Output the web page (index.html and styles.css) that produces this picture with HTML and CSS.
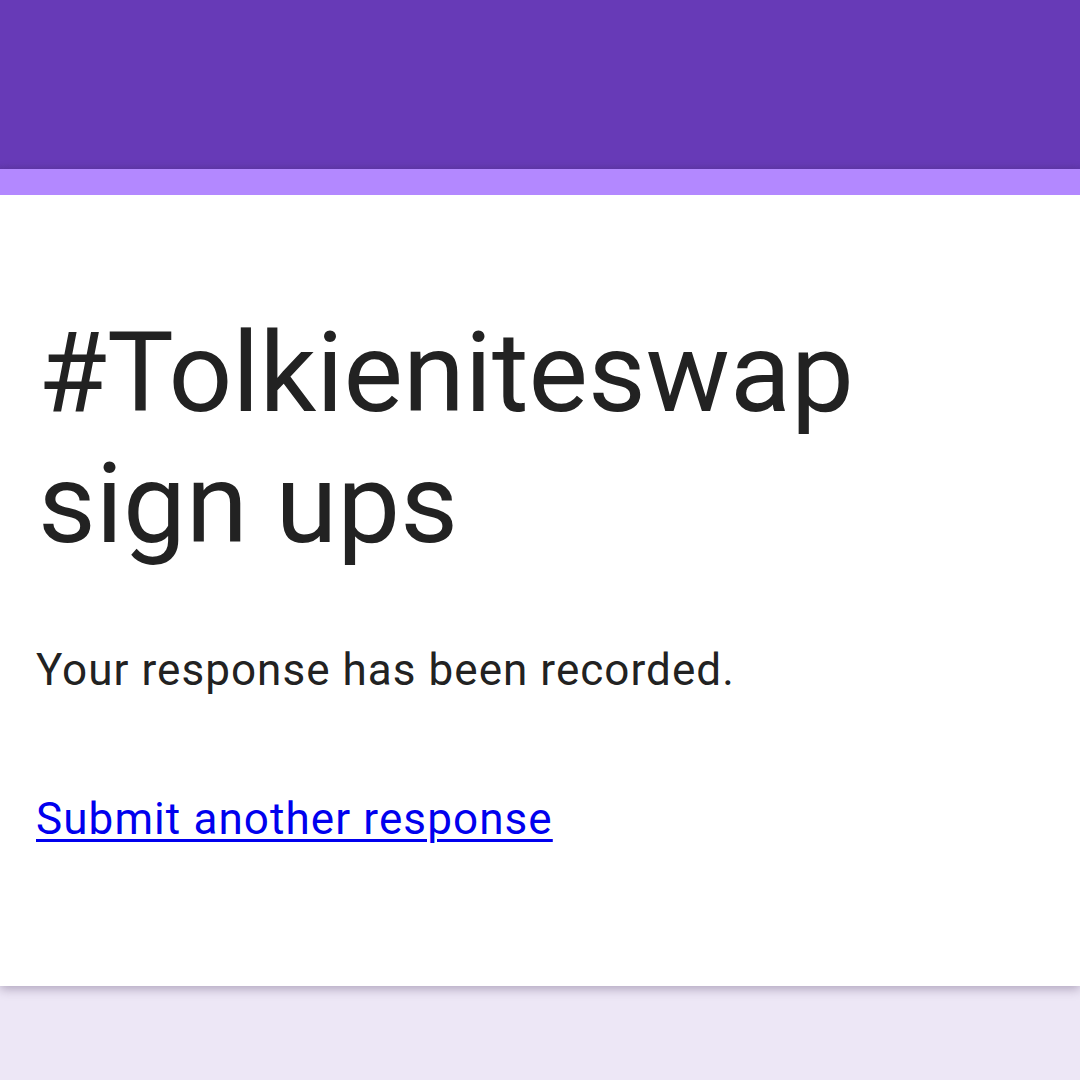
FILE: index.html
```html
<!DOCTYPE html>
<html>
<head>
<title>#Tolkieniteswap sign ups</title>
<meta http-equiv="Content-Type" content="text/html; charset=utf-8" />
<link rel="stylesheet" href="styles.css">
</head>
<body>
<div class="top"></div>
<div class="card">
	<div class="content">
		<h1 class="title">#Tolkieniteswap sign ups</h1>
		<p class="msg">Your response has been recorded.</p>
		<a class="again" href="#">Submit another response</a>
	</div>
</div>
</body>
</html>
```

FILE: styles.css
```css
* {margin:0;padding:0;}
html,body {height:100%;}
body {background:#ede7f6;font-family:Roboto,"Noto Sans",Arial,sans-serif;color:#222;overflow:hidden;}
.top {height:169px;background:#673ab7;background-image:linear-gradient(to bottom,#673ab7 163px,#6137ad 169px);}
.card {background:#fff;border-top:26px solid #b388ff;box-shadow:0 3px 10px rgba(60,40,80,.35);position:relative;}
.content {padding:112px 36px 142px 36px;height:537px;}
.title {font-size:112px;font-weight:400;line-height:131px;padding-left:2px;letter-spacing:0;}
.msg {font-size:44px;line-height:52px;margin-top:75px;letter-spacing:1.05px;}
.again {display:inline-block;font-size:44px;line-height:52px;margin-top:97px;color:#0000ee;letter-spacing:1.1px;text-decoration:underline;text-decoration-thickness:3px;text-underline-offset:5px;}
```
